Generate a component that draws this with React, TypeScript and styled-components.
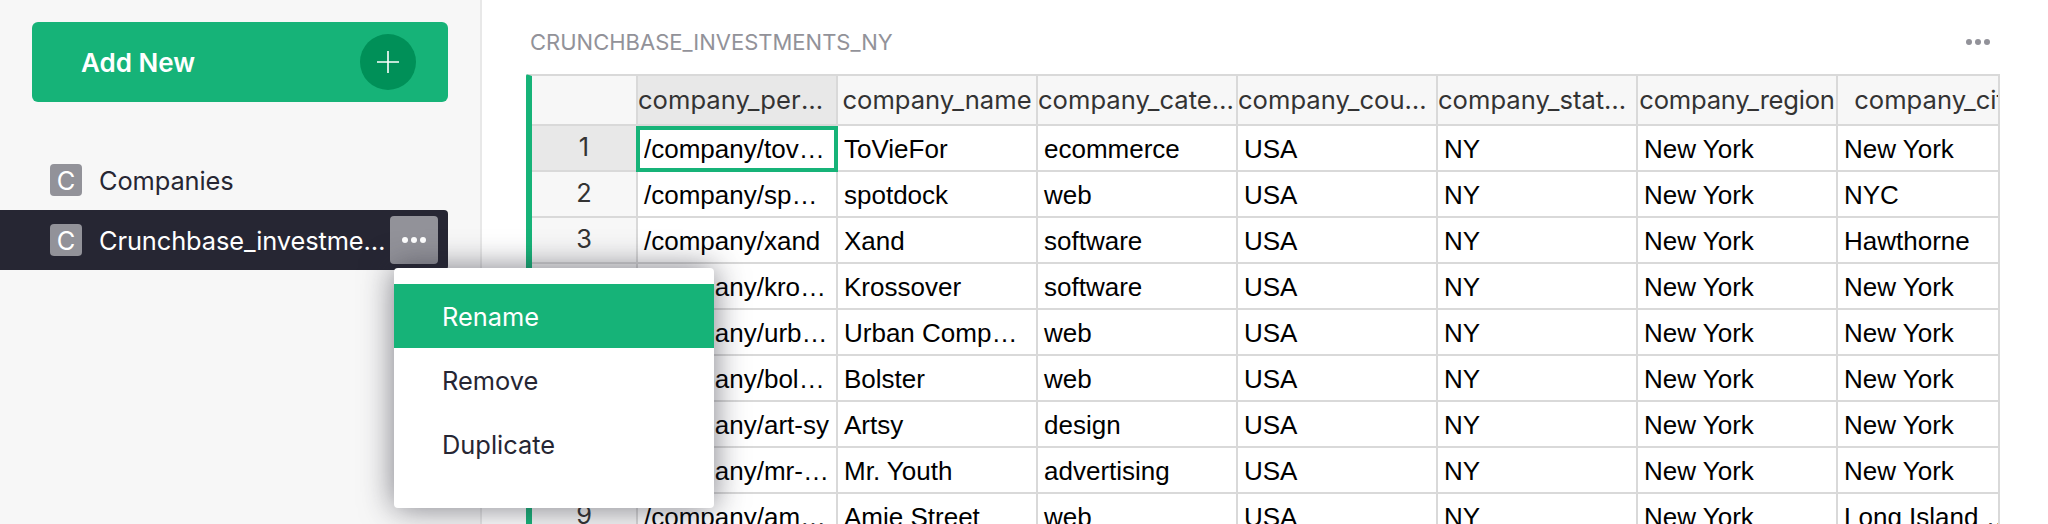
import React from 'react';
import styled, { createGlobalStyle } from 'styled-components';

const GREEN = '#16b378';
const LINE = '#d9d9d9';

const GlobalStyle = createGlobalStyle`
  html, body {
    margin: 0;
    height: 100%;
    overflow: hidden;
    background: #fff;
    font-family: Inter, sans-serif;
  }
`;

const Page = styled.div`
  display: flex;
  width: 2048px;
  height: 524px;
  overflow: hidden;
`;

const Sidebar = styled.aside`
  position: relative;
  flex: none;
  width: 480px;
  padding-top: 22px;
  box-sizing: content-box;
  background: #f7f7f7;
  border-right: 2px solid #e8e8e8;
`;

const AddButton = styled.div`
  display: flex;
  align-items: center;
  justify-content: space-between;
  box-sizing: border-box;
  width: 416px;
  height: 80px;
  margin-left: 32px;
  padding: 0 32px 0 49px;
  background: ${GREEN};
  border-radius: 6px;
  color: #fff;
  font-size: 26px;
  font-weight: 600;
`;

const PlusCircle = styled.div`
  display: flex;
  align-items: center;
  justify-content: center;
  width: 56px;
  height: 56px;
  border-radius: 50%;
  background: #009058;
`;

const PageList = styled.div`
  display: flex;
  flex-direction: column;
  margin-top: 48px;
`;

const PageRow = styled.div<{ $active?: boolean }>`
  display: flex;
  align-items: center;
  box-sizing: border-box;
  width: 448px;
  height: 60px;
  padding: 0 10px 0 50px;
  border-radius: 0 4px 4px 0;
  background: ${(p) => (p.$active ? '#262633' : 'transparent')};
  color: ${(p) => (p.$active ? '#fff' : '#262633')};
`;

const PageIcon = styled.div`
  display: flex;
  flex: none;
  align-items: center;
  justify-content: center;
  width: 32px;
  height: 32px;
  margin-right: 17px;
  border-radius: 4px;
  background: #929299;
  color: #fff;
  font-size: 25.4px;
`;

const PageName = styled.div`
  flex: 1;
  min-width: 0;
  overflow: hidden;
  font-size: 25.4px;
  letter-spacing: -0.1px;
  white-space: nowrap;
  text-overflow: ellipsis;
`;

const MoreButton = styled.div`
  display: flex;
  flex: none;
  align-items: center;
  justify-content: center;
  width: 48px;
  height: 48px;
  margin-left: 2px;
  border-radius: 4px;
  background: #929299;
`;

const Menu = styled.div`
  position: absolute;
  z-index: 5;
  left: 394px;
  top: 268px;
  box-sizing: border-box;
  width: 320px;
  height: 240px;
  padding: 16px 0;
  border-radius: 4px;
  background: #fff;
  box-shadow: 0 0 32px rgba(38, 38, 51, 0.6);
`;

const MenuItem = styled.div<{ $active?: boolean }>`
  display: flex;
  align-items: center;
  height: 64px;
  padding-left: 48px;
  font-size: 25.4px;
  background: ${(p) => (p.$active ? GREEN : 'transparent')};
  color: ${(p) => (p.$active ? '#fff' : '#262633')};
`;

const Main = styled.main`
  flex: 1;
  min-width: 0;
  padding-left: 44px;
`;

const TitleBar = styled.div`
  display: flex;
  align-items: center;
  justify-content: space-between;
  width: 1464px;
  height: 74px;
  padding: 10px 0 0 4px;
  box-sizing: border-box;
  color: #929299;
  font-size: 22px;
`;

const Grid = styled.div`
  box-sizing: border-box;
  width: 1474px;
  overflow: hidden;
  border-top: 2px solid ${LINE};
  border-left: 6px solid ${GREEN};
  border-right: 2px solid ${LINE};
  border-top-left-radius: 2px;
`;

const GridRow = styled.div`
  display: flex;
  width: max-content;
`;

const Cell = styled.div<{ $width: number; $selected?: boolean }>`
  position: relative;
  flex: none;
  box-sizing: border-box;
  width: ${(p) => p.$width}px;
  height: 46px;
  padding: 0 6px;
  overflow: ${(p) => (p.$selected ? 'visible' : 'hidden')};
  border-right: 2px solid ${LINE};
  border-bottom: 2px solid ${LINE};
  color: #000;
  font-family: 'Liberation Sans', Arial, sans-serif;
  font-size: 26px;
  line-height: 46px;
  white-space: nowrap;
  text-overflow: ellipsis;
  ${(p) =>
    p.$selected &&
    `
    &::after {
      content: '';
      position: absolute;
      inset: 0 -2px -2px -2px;
      border: 4px solid ${GREEN};
    }
    span { display: block; overflow: hidden; text-overflow: ellipsis; }
  `}
`;

const HeadCell = styled(Cell)<{ $on?: boolean; $tight?: boolean }>`
  height: 50px;
  padding: 0;
  background: ${(p) => (p.$on ? '#e8e8e8' : '#f7f7f7')};
  color: #333;
  font-family: Inter, sans-serif;
  font-size: 25.6px;
  letter-spacing: ${(p) => (p.$tight ? '-0.25px' : '0')};
  line-height: 48px;
  text-align: center;
`;

const RowNumber = styled(Cell)<{ $on?: boolean }>`
  padding: 0;
  background: ${(p) => (p.$on ? '#e8e8e8' : '#f7f7f7')};
  color: #333;
  font-family: Inter, sans-serif;
  font-size: 25.4px;
  line-height: 42px;
  text-align: center;
`;

const columns: [string, number][] = [
  ['company_permalink', 200],
  ['company_name', 200],
  ['company_category_code', 200],
  ['company_country_code', 200],
  ['company_state_code', 200],
  ['company_region', 200],
  ['company_city', 200],
];

const rows = [
  ['1', '/company/tovieFor', 'ToVieFor', 'ecommerce', 'New York'],
  ['2', '/company/spotdock', 'spotdock', 'web', 'NYC'],
  ['3', '/company/xand', 'Xand', 'software', 'Hawthorne'],
  ['4', '/company/krossover', 'Krossover', 'software', 'New York'],
  ['5', '/company/urbancompass', 'Urban Compass Inc', 'web', 'New York'],
  ['6', '/company/bolster', 'Bolster', 'web', 'New York'],
  ['7', '/company/art-sy', 'Artsy', 'design', 'New York'],
  ['8', '/company/mr-youth', 'Mr. Youth', 'advertising', 'New York'],
  ['9', '/company/amie-street', 'Amie Street', 'web', 'Long Island City, NY'],
];

const Dots = ({ color }: { color: string }) => (
  <svg width="24" height="6" viewBox="0 0 24 6" fill={color}>
    <circle cx="3" cy="3" r="3" />
    <circle cx="12" cy="3" r="3" />
    <circle cx="21" cy="3" r="3" />
  </svg>
);

export default function App() {
  return (
    <Page>
      <GlobalStyle />
      <Sidebar>
        <AddButton>
          Add New
          <PlusCircle>
            <svg width="24" height="24" viewBox="0 0 24 24" stroke="#fff" strokeWidth="1.6">
              <path d="M12 1v22M1 12h22" />
            </svg>
          </PlusCircle>
        </AddButton>
        <PageList>
          <PageRow>
            <PageIcon>C</PageIcon>
            <PageName>Companies</PageName>
          </PageRow>
          <PageRow $active>
            <PageIcon>C</PageIcon>
            <PageName>Crunchbase_investments_ny</PageName>
            <MoreButton>
              <Dots color="#fff" />
            </MoreButton>
          </PageRow>
        </PageList>
        <Menu>
          <MenuItem $active>Rename</MenuItem>
          <MenuItem>Remove</MenuItem>
          <MenuItem>Duplicate</MenuItem>
        </Menu>
      </Sidebar>
      <Main>
        <TitleBar>
          <span>CRUNCHBASE_INVESTMENTS_NY</span>
          <Dots color="#929299" />
        </TitleBar>
        <Grid>
          <GridRow>
            <HeadCell $width={106} />
            {columns.map(([name, width], i) => (
              <HeadCell key={name} $width={width} $on={i === 0} $tight={name === 'company_region'}>
                {name}
              </HeadCell>
            ))}
          </GridRow>
          {rows.map(([n, link, name, category, city]) => (
            <GridRow key={n}>
              <RowNumber $width={106} $on={n === '1'}>
                {n}
              </RowNumber>
              <Cell $width={200} $selected={n === '1'}>
                {n === '1' ? <span>{link}</span> : link}
              </Cell>
              <Cell $width={200}>{name}</Cell>
              <Cell $width={200}>{category}</Cell>
              <Cell $width={200}>USA</Cell>
              <Cell $width={200}>NY</Cell>
              <Cell $width={200}>New York</Cell>
              <Cell $width={200}>{city}</Cell>
            </GridRow>
          ))}
        </Grid>
      </Main>
    </Page>
  );
}
